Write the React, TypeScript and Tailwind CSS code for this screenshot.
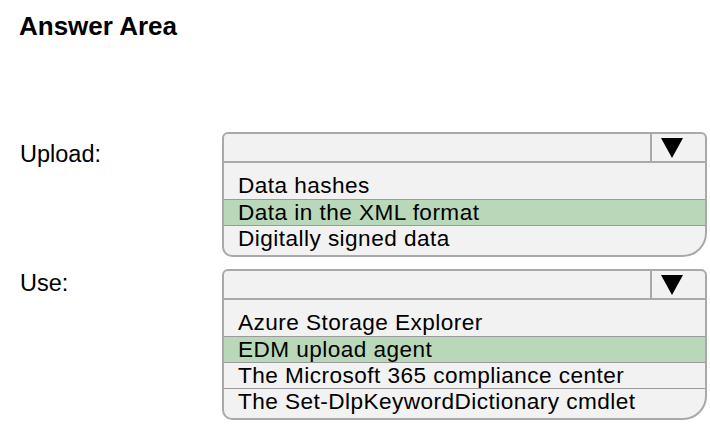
import React from "react";

type Option = { text: string; selected?: boolean };

const FONT = "font-['Liberation_Sans',Arial,sans-serif]";

function Dropdown({ options }: { options: Option[] }) {
  return (
    <div className="w-[485px] rounded-tl-[6px] rounded-tr-[6px] rounded-bl-[10px] rounded-br-[24px] border-2 border-[#a9a9a9] bg-[#f2f2f2] overflow-hidden">
      {/* Header */}
      <div className="flex h-[29px] border-b-2 border-[#a9a9a9]">
        <div className="flex-1" />
        <div className="flex w-[55px] items-center border-l-2 border-[#a9a9a9] pl-[9px]">
          <svg width="22" height="20" viewBox="0 0 22 20">
            <polygon points="0,0 22,0 11,20" fill="#000" />
          </svg>
        </div>
      </div>

      {/* Options */}
      <div className="pt-[10px] pb-[4px]">
        {options.map((o, i) => (
          <div
            key={o.text}
            className={
              "h-[26px] whitespace-nowrap pl-[14px] text-[22.6px] leading-[25px] tracking-[0.45px] text-black " +
              (i > 0 ? "border-t border-[#9a9a9a] " : "") +
              (o.selected ? "bg-[#b9d8b9]" : "")
            }
          >
            {o.text}
          </div>
        ))}
      </div>
    </div>
  );
}

export default function App() {
  return (
    <div className={`h-[429px] w-[710px] bg-white ${FONT} text-black`}>
      <div className="pl-[19px] pt-[11px] text-[26px] font-bold leading-[30px]">Answer Area</div>

      <div className="mt-[91px] flex flex-col gap-[12px]">
        <div className="flex">
          <div className="w-[222px] pl-[20px] pt-[8px] text-[23.5px] leading-[28px]">Upload:</div>
          <Dropdown
            options={[
              { text: "Data hashes" },
              { text: "Data in the XML format", selected: true },
              { text: "Digitally signed data" },
            ]}
          />
        </div>
        <div className="flex">
          <div className="w-[222px] pl-[20px] pt-0 text-[23.5px] leading-[28px]">Use:</div>
          <Dropdown
            options={[
              { text: "Azure Storage Explorer" },
              { text: "EDM upload agent", selected: true },
              { text: "The Microsoft 365 compliance center" },
              { text: "The Set-DlpKeywordDictionary cmdlet" },
            ]}
          />
        </div>
      </div>
    </div>
  );
}
